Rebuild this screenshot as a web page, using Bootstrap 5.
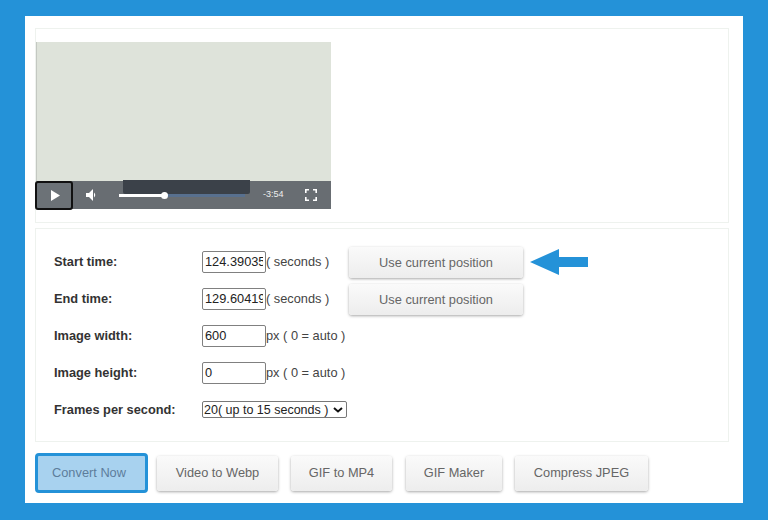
<!DOCTYPE html>
<html lang="en">
<head>
<meta charset="utf-8">
<title>Video to GIF</title>
<link href="https://cdn.jsdelivr.net/npm/bootstrap@5.3.0/dist/css/bootstrap.min.css" rel="stylesheet">
<style>
html,body{height:520px;overflow:hidden;margin:0}
body{background:#2492d8;padding:16px 25px 17px;font-family:"Liberation Sans",Arial,sans-serif;font-size:12.8px;color:#333}
.sheet{height:487px;padding:12px 14px 0 10px}
.pane{border:1px solid #eef2ee}
.pane-video{height:195px;padding-top:13px}
.player{width:295px;height:167px;background:#dee3da;border-left:1px solid #c4c8c2}
.ctrl{height:28px;background:#686d72;color:#fff}
.play{width:38px;height:29px;margin-left:-2px;background:#6c7277;border:2px solid #111;border-radius:3px;padding-left:1px}
.track{width:126px;height:3px;background:#58708f;margin-left:22px}
.track i{position:absolute;left:0;top:0;height:3px;width:46px;background:#fff}
.track b{position:absolute;left:42px;top:-2px;width:7px;height:7px;border-radius:50%;background:#fff}
.thumbbar{position:absolute;left:86px;top:-1px;width:127px;height:14px;background:#3b4149;border-radius:0 0 2px 2px}
.vol{margin-left:13px}
.clock{font-size:9px;margin-left:18px;color:#eee;width:20px;white-space:nowrap}
.fs{margin-left:22px}
.pane-form{height:214px;margin-top:5px;padding:14px 0 0 18px}
.frow{height:37px}
.frow label{width:148px;font-weight:700;color:#333;margin:0}
.num{width:64px;height:22px;border:1px solid #808080;border-radius:2px;padding:0 2px;font:12.8px "Liberation Sans",Arial,sans-serif;color:#222;background:#fff;outline:0}
.hint{color:#444;white-space:nowrap}
.hint-sec{width:83px}
.pick{width:145px;height:17px;font:12.5px "Liberation Sans",Arial,sans-serif;color:#222;border:1px solid #777;border-radius:2px;padding:0 0 0 1px;appearance:none;-webkit-appearance:none;background:#fff url("data:image/svg+xml,%3Csvg xmlns='http://www.w3.org/2000/svg' width='10' height='6'%3E%3Cpath d='M1 1l4 3.5L9 1' fill='none' stroke='%23111' stroke-width='2'/%3E%3C/svg%3E") no-repeat right 3px center}
.plain{background:linear-gradient(#fafafa,#ededed);border:0;border-radius:3px;box-shadow:0 1px 3px rgba(0,0,0,.35);color:#666;font-size:12.8px;font-family:"Liberation Sans",Arial,sans-serif;padding:0;height:31px}
.plain.use{width:174px;margin-top:2px}
.arrow{margin-left:7px}
.actions{margin-top:11px}
.actions .plain{height:35px}
.go{width:113px;height:40px;background:#a8d2ef;border:3px solid #2492d8;border-radius:4px;color:#5d7d9b;font-size:12.8px;font-family:"Liberation Sans",Arial,sans-serif;padding:0 5px 0 0}
.w1{width:121px;margin-left:9px}
.w2{width:101px;margin-left:13px}
.w3{width:96px;margin-left:14px}
.w4{width:133px;margin-left:13px}
</style>
</head>
<body>
<div class="sheet bg-white">
  <div class="pane pane-video">
    <div class="player d-flex flex-column justify-content-end">
      <div class="ctrl d-flex align-items-center position-relative">
        <div class="thumbbar"></div>
        <div class="play d-flex align-items-center justify-content-center"><svg width="10" height="11" viewBox="0 0 10 11"><path d="M1 0 L10 5.5 L1 11 Z" fill="#fff"/></svg></div>
        <svg class="vol" width="11" height="12" viewBox="0 0 11 12"><path d="M0 4 H3 L7 0 V12 L3 8 H0 Z" fill="#fff"/><path d="M8 3.5 Q10.5 6 8 8.5 Z" fill="#fff"/></svg>
        <div class="track position-relative"><i></i><b></b></div>
        <div class="clock">-3:54</div>
        <svg class="fs" width="12" height="12" viewBox="0 0 12 12" fill="none" stroke="#fff" stroke-width="1.6"><path d="M.8 4V.8H4M8 .8h3.2V4M11.2 8v3.2H8M4 11.2H.8V8"/></svg>
      </div>
    </div>
  </div>
  <div class="pane pane-form">
    <div class="frow d-flex align-items-center"><label for="a">Start time:</label><input id="a" class="num" value="124.390358"><span class="hint hint-sec">( seconds )</span>
      <div class="d-flex align-items-center"><button class="btn plain use" type="button">Use current position</button>
      <svg class="arrow" width="58" height="26" viewBox="0 0 58 26"><path d="M0 13 L29 0 V8 H58 V18 H29 V26 Z" fill="#2492d8"/></svg></div></div>
    <div class="frow d-flex align-items-center"><label for="b">End time:</label><input id="b" class="num" value="129.604195"><span class="hint hint-sec">( seconds )</span>
      <button class="btn plain use" type="button">Use current position</button></div>
    <div class="frow d-flex align-items-center"><label for="c">Image width:</label><input id="c" class="num" value="600"><span class="hint">px ( 0 = auto )</span></div>
    <div class="frow d-flex align-items-center"><label for="d">Image height:</label><input id="d" class="num" value="0"><span class="hint">px ( 0 = auto )</span></div>
    <div class="frow d-flex align-items-center"><label for="e">Frames per second:</label><select id="e" class="pick"><option>20( up to 15 seconds )</option></select></div>
  </div>
  <div class="actions d-flex align-items-center">
    <button class="btn go" type="button">Convert Now</button>
    <button class="btn plain w1" type="button">Video to Webp</button>
    <button class="btn plain w2" type="button">GIF to MP4</button>
    <button class="btn plain w3" type="button">GIF Maker</button>
    <button class="btn plain w4" type="button">Compress JPEG</button>
  </div>
</div>
<script src="https://cdn.jsdelivr.net/npm/bootstrap@5.3.0/dist/js/bootstrap.bundle.min.js"></script>
</body>
</html>
